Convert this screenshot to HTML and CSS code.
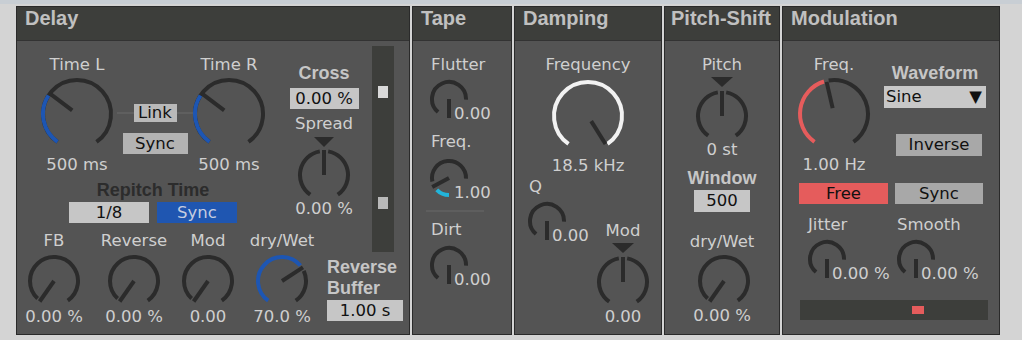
FILE: index.html
```html
<!DOCTYPE html>
<html lang="en">
<head>
    <meta charset="UTF-8">
    <title>Delay Device</title>
    <link rel="stylesheet" href="styles.css">
</head>
<body>
<div class="rack">

    <!-- Delay -->
    <section class="panel delay">
        <div class="head">Delay</div>
        <div class="body">
            <div class="d-top">
                <div class="times">
                    <div class="time-row">
                        <div class="kcol time-l">
                            <div class="lbl">Time L</div>
                            <div class="knob big" data-a="-53" data-track="-145,145" data-fill="-145,-57" data-color="#1d56b3"></div>
                            <div class="val">500 ms</div>
                        </div>
                        <div class="link-col">
                            <div class="link-line"><span class="btn link">Link</span></div>
                            <span class="btn sync">Sync</span>
                        </div>
                        <div class="kcol time-r">
                            <div class="lbl">Time R</div>
                            <div class="knob big" data-a="-53" data-track="-145,145" data-fill="-145,-57" data-color="#1d56b3"></div>
                            <div class="val">500 ms</div>
                        </div>
                    </div>
                    <div class="bold dark repitch">Repitch Time</div>
                    <div class="repitch-row">
                        <span class="box">1/8</span>
                        <span class="box blue">Sync</span>
                    </div>
                </div>
                <div class="cross-col">
                    <div class="bold">Cross</div>
                    <div class="box cross-box">0.00 %</div>
                    <div class="lbl spread">Spread</div>
                    <div class="tri"></div>
                    <div class="knob mid" data-a="0" data-track="-145,-10;10,145"></div>
                    <div class="val">0.00 %</div>
                </div>
                <div class="vslider"><i></i><i></i></div>
            </div>
            <div class="d-bottom">
                <div class="kcol">
                    <div class="lbl">FB</div>
                    <div class="knob mid" data-a="-145" data-track="-137,145"></div>
                    <div class="val">0.00 %</div>
                </div>
                <div class="kcol">
                    <div class="lbl">Reverse</div>
                    <div class="knob mid" data-a="-145" data-track="-137,145"></div>
                    <div class="val">0.00 %</div>
                </div>
                <div class="kcol">
                    <div class="lbl">Mod</div>
                    <div class="knob mid" data-a="-145" data-track="-137,145"></div>
                    <div class="val">0.00</div>
                </div>
                <div class="kcol">
                    <div class="lbl">dry/Wet</div>
                    <div class="knob mid" data-a="57" data-track="65,145" data-fill="-145,50" data-color="#1d56b3"></div>
                    <div class="val">70.0 %</div>
                </div>
                <div class="rbuf">
                    <div class="bold">Reverse<br>Buffer</div>
                    <div class="box">1.00 s</div>
                </div>
            </div>
        </div>
    </section>

    <!-- Tape -->
    <section class="panel tape">
        <div class="head">Tape</div>
        <div class="body">
            <div class="lbl">Flutter</div>
            <div class="tknob flutter">
                <div class="knob tiny" data-a="180" data-track="-140,92"></div>
                <div class="val">0.00</div>
            </div>
            <div class="lbl t-freq">Freq.</div>
            <div class="tknob t-freq-k">
                <div class="knob tiny" data-a="-118" data-track="-102,92" data-fill="-180,-134" data-color="#22b4da"></div>
                <div class="val">1.00</div>
            </div>
            <div class="sep"></div>
            <div class="lbl dirt">Dirt</div>
            <div class="tknob dirt-k">
                <div class="knob tiny" data-a="180" data-track="-140,92"></div>
                <div class="val">0.00</div>
            </div>
        </div>
    </section>

    <!-- Damping -->
    <section class="panel damp">
        <div class="head">Damping</div>
        <div class="body">
            <div class="lbl">Frequency</div>
            <div class="knob big" data-a="148" data-fill="-145,145" data-color="#f2f2f2"></div>
            <div class="val hz">18.5 kHz</div>
            <div class="q-mod">
                <div class="qcol">
                    <div class="lbl">Q</div>
                    <div class="tknob">
                        <div class="knob tiny" data-a="180" data-track="-140,92"></div>
                        <div class="val">0.00</div>
                    </div>
                </div>
                <div class="modcol">
                    <div class="lbl">Mod</div>
                    <div class="tri"></div>
                    <div class="knob mid" data-a="0" data-track="-145,-10;10,145"></div>
                    <div class="val">0.00</div>
                </div>
            </div>
        </div>
    </section>

    <!-- Pitch-Shift -->
    <section class="panel pitch">
        <div class="head">Pitch-Shift</div>
        <div class="body">
            <div class="lbl">Pitch</div>
            <div class="tri"></div>
            <div class="knob mid p-knob" data-a="0" data-track="-145,-10;10,145"></div>
            <div class="val st">0 st</div>
            <div class="bold">Window</div>
            <div class="box win-box">500</div>
            <div class="lbl dw">dry/Wet</div>
            <div class="knob mid dw-knob" data-a="-145" data-track="-137,145"></div>
            <div class="val dw-val">0.00 %</div>
        </div>
    </section>

    <!-- Modulation -->
    <section class="panel mod">
        <div class="head">Modulation</div>
        <div class="body">
            <div class="m-top">
                <div class="m-left">
                    <div class="lbl">Freq.</div>
                    <div class="knob big" data-a="-13" data-track="-9,145" data-fill="-145,-17" data-color="#e65c5c"></div>
                    <div class="val">1.00 Hz</div>
                </div>
                <div class="m-right">
                    <div class="bold">Waveform</div>
                    <div class="select"><span>Sine</span><span>▼</span></div>
                    <div class="btn inverse">Inverse</div>
                </div>
            </div>
            <div class="m-btns">
                <span class="btn free">Free</span>
                <span class="btn m-sync">Sync</span>
            </div>
            <div class="m-jit">
                <div>
                    <div class="lbl">Jitter</div>
                    <div class="tknob">
                        <div class="knob tiny" data-a="180" data-track="-140,92"></div>
                        <div class="val">0.00 %</div>
                    </div>
                </div>
                <div>
                    <div class="lbl">Smooth</div>
                    <div class="tknob">
                        <div class="knob tiny" data-a="180" data-track="-140,92"></div>
                        <div class="val">0.00 %</div>
                    </div>
                </div>
            </div>
            <div class="m-bar"><i></i></div>
        </div>
    </section>
</div>

<script>
    // Drehregler als SVG zeichnen: [Größe, Radius, Zeiger innen, Zeiger außen]
    const geo = { big: [76, 34, 6, 33], mid: [54, 24, 0, 25], tiny: [42, 17, 0, 19] };

    function pt(c, r, a) {
        const t = a * Math.PI / 180;
        return (c + r * Math.sin(t)).toFixed(2) + ' ' + (c - r * Math.cos(t)).toFixed(2);
    }

    function arc(c, r, a0, a1) {
        return 'M' + pt(c, r, a0) + ' A' + r + ' ' + r + ' 0 ' + (a1 - a0 > 180 ? 1 : 0) + ' 1 ' + pt(c, r, a1);
    }

    document.querySelectorAll('.knob').forEach(k => {
        const kind = k.classList.contains('big') ? 'big' : k.classList.contains('tiny') ? 'tiny' : 'mid';
        const [s, r, n0, n1] = geo[kind];
        const c = s / 2;
        let svg = '<svg width="' + s + '" height="' + s + '" viewBox="0 0 ' + s + ' ' + s + '"><g fill="none" stroke-width="4">';
        (k.dataset.track || '').split(';').forEach(seg => {
            if (!seg) return;
            const [a0, a1] = seg.split(',').map(Number);
            svg += '<path d="' + arc(c, r, a0, a1) + '" stroke="#2b2b2b"/>';
        });
        if (k.dataset.fill) {
            const [f0, f1] = k.dataset.fill.split(',').map(Number);
            svg += '<path d="' + arc(c, r, f0, f1) + '" stroke="' + k.dataset.color + '"/>';
        }
        const a = +k.dataset.a;
        svg += '<path d="M' + pt(c, n0, a) + ' L' + pt(c, n1, a) + '" stroke="#2b2b2b"/>';
        svg += '</g></svg>';
        k.innerHTML = svg;
    });
</script>
</body>
</html>
```

FILE: styles.css
```css
body {
    margin: 0;
    padding: 6px 0 0 16px;
    height: 340px;
    box-sizing: border-box;
    overflow: hidden;
    background: linear-gradient(#c8ced4 0, #c8ced4 4px, #d4d4d4 4px);
    font-family: "DejaVu Sans", sans-serif;
    font-size: 16.5px;
    color: #cfcfcf;
}
.rack {
    display: flex;
    gap: 2px;
}
.panel {
    height: 329px;
    box-sizing: border-box;
    border: 1px solid #2a2a2a;
    background: #545454;
    display: flex;
    flex-direction: column;
}
.delay { width: 394px; }
.tape { width: 100px; }
.damp { width: 148px; }
.pitch { width: 116px; }
.mod { width: 218px; }

.head {
    flex: none;
    height: 33px;
    line-height: 33px;
    padding-left: 8px;
    background: #3d3e3b;
    border-bottom: 1px solid #333;
    font: bold 20px "Liberation Sans", Arial, sans-serif;
    color: #c0c0c0;
    white-space: nowrap;
}
.pitch .head { padding-left: 6px; }
.body {
    flex: 1;
    display: flex;
    flex-direction: column;
}

.lbl, .val {
    line-height: 18px;
    white-space: nowrap;
}
.bold {
    font: bold 18px/20px "Liberation Sans", Arial, sans-serif;
    color: #c6c6c6;
    white-space: nowrap;
}
.dark { color: #2c2c2c; }
.knob svg { display: block; }
.kcol {
    display: flex;
    flex-direction: column;
    align-items: center;
}
.btn, .box {
    display: block;
    color: #111;
    text-align: center;
}
.box {
    height: 21px;
    line-height: 21px;
    background: #c6c6c6;
}
.tri {
    width: 0;
    height: 0;
    border-left: 10px solid transparent;
    border-right: 10px solid transparent;
    border-top: 10px solid #2b2b2b;
}
.tknob {
    display: flex;
    align-items: flex-start;
}
.tknob .val { margin: 26.5px 0 0 -16px; }

/* Delay */
.d-top {
    display: flex;
    align-items: flex-start;
}
.times {
    width: 232px;
    margin-left: 20px;
    padding-top: 15px;
}
.time-row { display: flex; }
.time-l { width: 80px; }
.time-r { width: 72px; }
.time-row .knob { margin-top: 2px; }
.time-row .val { margin-top: 3.5px; }
.link-col {
    width: 76px;
    padding-top: 48px;
    display: flex;
    flex-direction: column;
    align-items: center;
}
.link-line {
    align-self: stretch;
    display: flex;
    justify-content: center;
    background: linear-gradient(transparent 8px, #5f5f5f 8px, #5f5f5f 10px, transparent 10px);
}
.link {
    width: 43px;
    height: 18px;
    line-height: 18px;
    background: #b9b9b9;
}
.sync {
    width: 65px;
    height: 21px;
    line-height: 21px;
    margin-top: 11px;
    background: #b3b3b3;
}
.repitch {
    margin-top: 6px;
    text-align: center;
}
.repitch-row {
    margin-top: 2px;
    display: flex;
    justify-content: center;
    gap: 8px;
}
.repitch-row .box { width: 80px; }
.box.blue {
    background: #1f56b1;
    color: #c5cde0;
}
.cross-col {
    width: 76px;
    margin-left: 17px;
    padding-top: 21.7px;
    display: flex;
    flex-direction: column;
    align-items: center;
}
.cross-box {
    width: 69px;
    margin-top: 5px;
}
.spread { margin-top: 6.5px; }
.cross-col .tri { margin-top: 3.5px; }
.cross-col .knob { margin-top: 1px; }
.cross-col .val { margin-top: -1.5px; }
.vslider {
    width: 22px;
    height: 206px;
    margin: 5px 0 0 10px;
    padding-top: 40px;
    box-sizing: border-box;
    background: #3d3e3b;
}
.vslider i {
    display: block;
    width: 10px;
    height: 12px;
    margin-left: 6px;
    background: #d9d9d9;
}
.vslider i + i {
    margin-top: 99px;
    background: #b9b9b9;
}
.d-bottom {
    margin-top: -20px;
    display: grid;
    grid-template-columns: 74px 86px 62px 86px auto;
    align-items: start;
}
.d-bottom .knob { margin-top: 4px; }
.d-bottom .val { margin-top: -0.5px; }
.rbuf { margin: 25px 0 0 2px; }
.rbuf .bold { line-height: 21px; }
.rbuf .box {
    width: 76px;
    margin-top: 1px;
}

/* Tape */
.tape .body { padding-top: 15px; }
.tape .lbl { margin-left: 18px; }
.tape .tknob { margin-left: 15px; }
.flutter { margin-top: 4px; }
.t-freq { margin-top: 10.5px; }
.t-freq-k { margin-top: 6px; }
.sep {
    width: 58px;
    height: 2px;
    margin: 8.5px 0 0 13px;
    background: #5e5e5e;
}
.dirt { margin-top: 8.5px; }
.dirt-k { margin-top: 5.5px; }

/* Damping */
.damp .body {
    padding-top: 15px;
    align-items: center;
}
.damp .big { margin-top: 4px; }
.hz { margin-top: 3px; }
.q-mod {
    align-self: stretch;
    display: flex;
    align-items: flex-start;
}
.qcol { margin-top: 2.5px; }
.qcol .lbl { margin-left: 14px; }
.qcol .tknob { margin: 4.5px 0 0 11px; }
.modcol {
    width: 60px;
    margin: 46.5px 8px 0 auto;
    display: flex;
    flex-direction: column;
    align-items: center;
}
.modcol .tri,
.pitch .tri {
    border-left-width: 11px;
    border-right-width: 11px;
    margin-top: 3px;
}
.modcol .knob { margin-top: 2px; }
.modcol .val { margin-top: -1px; }

/* Pitch-Shift */
.pitch .body {
    padding-top: 14.5px;
    align-items: center;
}
.pitch .tri { margin-top: 3.5px; }
.p-knob { margin-top: 2px; }
.st { margin-top: -2.5px; }
.pitch .bold { margin-top: 9.2px; }
.win-box {
    width: 56px;
    height: 22px;
    line-height: 22px;
    margin-top: 2.3px;
}
.dw { margin-top: 21.5px; }
.dw-knob { margin: 2.5px 0 0 4px; }
.dw-val { margin-top: -0.5px; }

/* Modulation */
.m-top {
    display: flex;
    align-items: flex-start;
}
.m-left {
    width: 80px;
    margin-left: 11px;
    padding-top: 15px;
    display: flex;
    flex-direction: column;
    align-items: center;
}
.m-left .knob { margin-top: 2px; }
.m-left .val { margin-top: 3.5px; }
.m-right {
    width: 102px;
    margin-left: 10px;
    padding-top: 21.7px;
    display: flex;
    flex-direction: column;
}
.m-right .bold { text-align: center; }
.select {
    margin-top: 3.3px;
    height: 22px;
    line-height: 22px;
    padding: 0 4px 0 2px;
    display: flex;
    justify-content: space-between;
    background: #c8c8c8;
    color: #111;
}
.inverse {
    width: 86px;
    height: 22px;
    line-height: 22px;
    margin: 26px 0 0 12px;
    background: #a8a8a8;
}
.m-btns {
    display: flex;
    gap: 7px;
    margin: 9.5px 0 0 16px;
}
.m-btns .btn {
    height: 21px;
    line-height: 21px;
}
.free {
    width: 89px;
    background: #e55c5c;
}
.m-sync {
    width: 88px;
    background: #a8a8a8;
}
.m-jit {
    display: flex;
    margin: 11.5px 0 0 23px;
}
.m-jit > div { width: 89px; }
.m-jit .lbl { margin-left: 2px; }
.m-jit .tknob { margin-top: 4.5px; }
.m-bar {
    width: 188px;
    height: 20px;
    margin: 17.5px 0 0 17px;
    background: #3d3e3b;
}
.m-bar i {
    display: block;
    width: 12px;
    height: 8px;
    margin: 6px 0 0 112px;
    background: #e55c5c;
}
```
